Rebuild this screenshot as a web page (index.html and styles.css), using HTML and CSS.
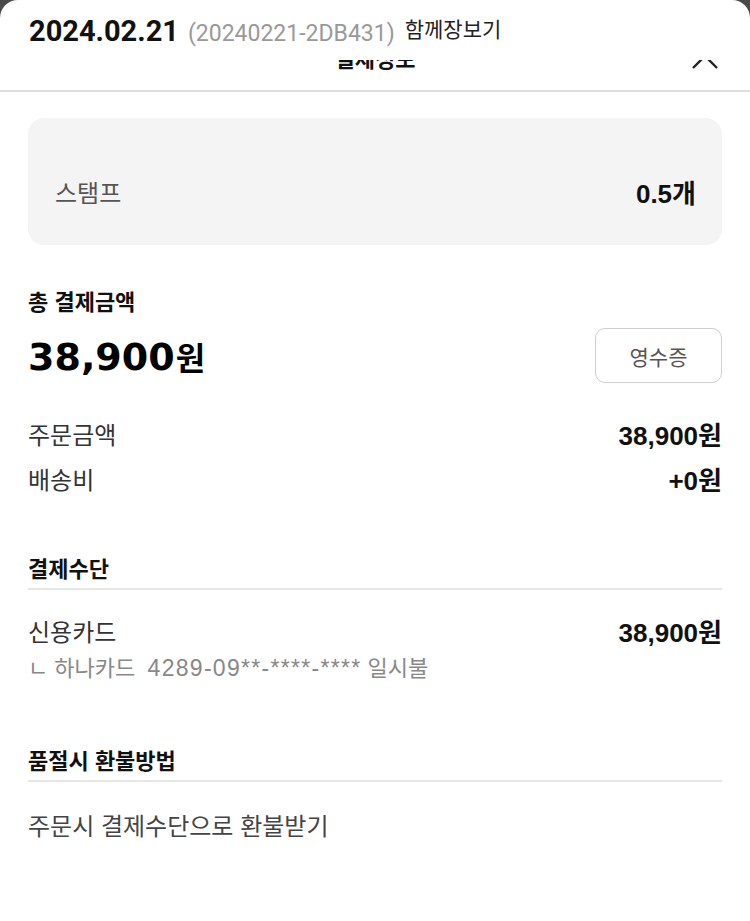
FILE: index.html
```html
<!DOCTYPE html>
<html lang="ko">
<head>
<meta charset="utf-8">
<link rel="stylesheet" href="styles.css">
</head>
<body>
<div class="sheet">
  <header class="head">
    <div class="daterow">
      <span class="date">2024.02.21</span>
      <span class="ordno">(20240221-2DB431)</span>
      <span class="together">함께장보기</span>
    </div>
    <div class="titlebar">
      <span class="title">결제정보</span>
      <svg class="chev" width="30" height="18" viewBox="0 0 30 18"><path d="M3 15 L15 3 L27 15" fill="none" stroke="#222" stroke-width="2.4"/></svg>
    </div>
  </header>
  <main class="content">
    <div class="stampbox">
      <span class="stamp-label">스탬프</span>
      <span class="stamp-val">0.5개</span>
    </div>

    <section class="total">
      <h3 class="sec-title">총 결제금액</h3>
      <div class="total-row">
        <span class="total-amt">38,900<span class="unit">원</span></span>
        <button class="receipt">영수증</button>
      </div>
      <div class="row"><span class="lbl">주문금액</span><span class="val">38,900원</span></div>
      <div class="row"><span class="lbl">배송비</span><span class="val">+0원</span></div>
    </section>

    <section class="pay">
      <h3 class="sec-title ruled">결제수단</h3>
      <div class="row"><span class="lbl">신용카드</span><span class="val">38,900원</span></div>
      <div class="card">ㄴ 하나카드&nbsp;&nbsp;<span class="cardno">4289-09**-****-****</span> 일시불</div>
    </section>

    <section class="refund">
      <h3 class="sec-title ruled">품절시 환불방법</h3>
      <div class="refund-text">주문시 결제수단으로 환불받기</div>
    </section>
  </main>
</div>
</body>
</html>
```
FILE: styles.css
```css
html, body {
  margin: 0;
  padding: 0;
  background: #4a4a4a;
}
body {
  font-family: "Liberation Sans", "Noto Sans CJK KR", sans-serif;
  color: #222;
}
.sheet {
  background: #fff;
  border-radius: 18px 18px 0 0;
  min-height: 921px;
  overflow: hidden;
}
.head {
  display: flex;
  flex-direction: column;
  border-bottom: 2px solid #dcdfe2;
}
.daterow {
  height: 60px;
  display: flex;
  align-items: baseline;
  padding: 14px 29px 0;
  box-sizing: border-box;
}
.date {
  font-family: Roboto, "Noto Sans CJK KR", sans-serif;
  font-size: 29px;
  font-weight: bold;
  color: #111;
}
.ordno {
  font-family: Roboto, "Noto Sans CJK KR", sans-serif;
  font-size: 23px;
  color: #999;
  margin-left: 9px;
}
.together {
  font-family: "Noto Sans CJK KR", sans-serif;
  font-size: 21px;
  color: #222;
  margin-left: 10px;
  position: relative;
  top: -4px;
}
.titlebar {
  height: 30px;
  overflow: hidden;
  position: relative;
  display: flex;
  justify-content: center;
  align-items: flex-start;
}
.title {
  font-family: "Noto Sans CJK KR", sans-serif;
  font-size: 22px;
  line-height: 32px;
  margin-top: -19px;
  font-weight: bold;
  color: #111;
}
.chev {
  position: absolute;
  right: 30px;
  top: -7px;
}
.content {
  padding: 26px 28px 40px;
}
.stampbox {
  background: #f4f4f4;
  border-radius: 16px;
  height: 127px;
  box-sizing: border-box;
  display: flex;
  align-items: center;
  justify-content: space-between;
  padding: 20px 26px 0 27px;
}
.stamp-label {
  font-family: "Noto Sans CJK KR", sans-serif;
  font-size: 24px;
  color: #555;
}
.stamp-val {
  font-size: 26px;
  font-weight: bold;
  color: #111;
}
.sec-title {
  margin: 0;
  font-family: "Noto Sans CJK KR", sans-serif;
  font-size: 22px;
  line-height: 30px;
  font-weight: bold;
  color: #111;
}
.total {
  margin-top: 40px;
}
.total-row {
  display: flex;
  justify-content: space-between;
  align-items: center;
  margin-top: 13px;
  margin-bottom: 28px;
}
.total-amt {
  font-family: "DejaVu Sans", sans-serif;
  font-size: 38px;
  font-weight: bold;
  color: #000;
}
.unit {
  font-family: "Noto Sans CJK KR", sans-serif;
  font-size: 32px;
  margin-left: 1px;
}
.receipt {
  width: 127px;
  height: 55px;
  border: 1px solid #cfcfcf;
  border-radius: 10px;
  background: #fff;
  font-family: "Noto Sans CJK KR", sans-serif;
  font-size: 21px;
  color: #555;
}
.row {
  display: flex;
  justify-content: space-between;
  align-items: center;
  height: 45px;
}
.lbl {
  font-family: "Noto Sans CJK KR", sans-serif;
  font-size: 24px;
  color: #333;
}
.val {
  font-size: 26px;
  font-weight: bold;
  color: #111;
}
.pay {
  margin-top: 51px;
}
.ruled {
  padding-bottom: 6px;
  border-bottom: 2px solid #e6e6e6;
  margin-bottom: 18px;
}
.card {
  font-size: 22px;
  line-height: 30px;
  color: #888;
}
.cardno {
  font-size: 23px;
  letter-spacing: 1.3px;
}
.refund {
  margin-top: 60px;
}
.refund .ruled {
  margin-bottom: 28px;
}
.refund-text {
  font-family: "Noto Sans CJK KR", sans-serif;
  font-size: 24px;
  line-height: 30px;
  color: #444;
}
```
